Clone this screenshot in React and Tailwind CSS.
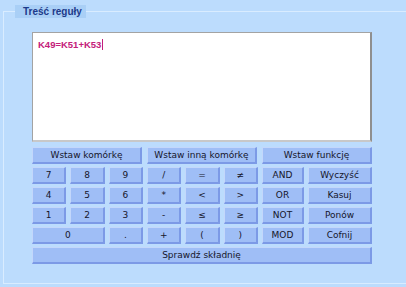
import React from 'react';

const font = { fontFamily: '"DejaVu Sans", Verdana, sans-serif' };
const boldFont = { fontFamily: '"Liberation Sans", Arial, sans-serif' };

const Btn = ({ label, className = '' }) => (
    <button
        className={`h-[17px] flex items-center justify-center whitespace-nowrap bg-[#9fbef6] border-t border-l border-t-[#c3d7fb] border-l-[#c3d7fb] border-b-2 border-r-2 border-b-[#7c9ae6] border-r-[#7c9ae6] text-[9px] leading-none text-[#15152a] ${className}`}
    >
        {label}
    </button>
);

const keys = [
    ['7', '8', '9', '/', '=', '≠', 'AND', 'Wyczyść'],
    ['4', '5', '6', '*', '<', '>', 'OR', 'Kasuj'],
    ['1', '2', '3', '-', '≤', '≥', 'NOT', 'Ponów'],
];

export default function App() {
    return (
        <div className="w-[406px] h-[287px] bg-[#bcdcfd] overflow-hidden pt-[11px] pl-[3px]" style={font}>
            {/* group box */}
            <div className="relative w-[420px] h-[273px] border border-[#d9ecff] pl-[28px] pt-[20px]">
                <div
                    className="absolute left-[11px] top-[-7px] w-[71px] h-[13px] bg-[#a9cff6] pl-[8px] text-[10px] leading-[13px] font-bold whitespace-nowrap text-[#1d3a8a]"
                    style={boldFont}
                >
                    Treść reguły
                </div>

                {/* formula box */}
                <div className="w-[340px] h-[110px] bg-white border border-[#a3a3a3] border-r-2 border-b-2 border-r-[#8f8f8f] border-b-[#c8c8c8] pl-[5px] pt-[3px] leading-[14px]">
                    <span className="text-[9.5px] font-bold text-[#c4207a]" style={boldFont}>K49=K51+K53</span>
                    <span className="inline-block w-px h-[11px] bg-[#c4207a] align-[-2px] ml-px" />
                </div>

                <div className="w-[340px] mt-[5px] flex flex-col gap-[3px]">
                    <div className="grid grid-cols-3 gap-x-[5px]">
                        <Btn label="Wstaw komórkę" />
                        <Btn label="Wstaw inną komórkę" />
                        <Btn label="Wstaw funkcję" />
                    </div>
                    <div className="grid grid-cols-[repeat(6,minmax(0,1fr))_42px_64px] gap-x-[4px] gap-y-[3px]">
                        {keys.flat().map((k, i) => (
                            <Btn key={i} label={k} />
                        ))}
                        <Btn label="0" className="col-span-2" />
                        <Btn label="." />
                        <Btn label="+" />
                        <Btn label="(" />
                        <Btn label=")" />
                        <Btn label="MOD" />
                        <Btn label="Cofnij" />
                    </div>
                    <Btn label="Sprawdź składnię" />
                </div>
            </div>
        </div>
    );
}
